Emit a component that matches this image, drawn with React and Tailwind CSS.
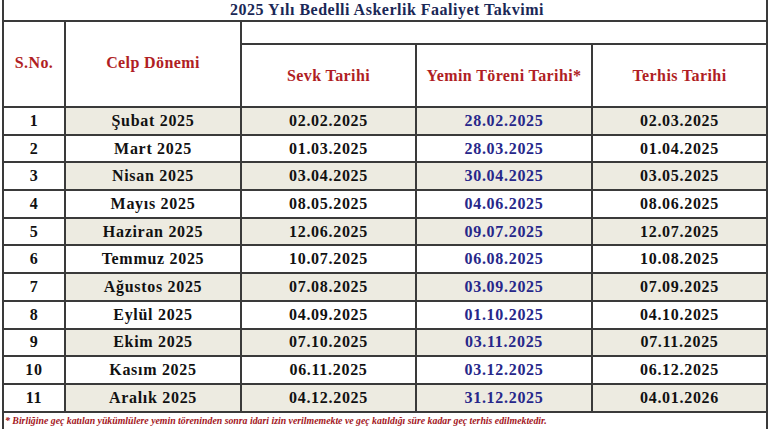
import React from "react";

const rows = [
  ["1", "Şubat 2025", "02.02.2025", "28.02.2025", "02.03.2025"],
  ["2", "Mart 2025", "01.03.2025", "28.03.2025", "01.04.2025"],
  ["3", "Nisan 2025", "03.04.2025", "30.04.2025", "03.05.2025"],
  ["4", "Mayıs 2025", "08.05.2025", "04.06.2025", "08.06.2025"],
  ["5", "Haziran 2025", "12.06.2025", "09.07.2025", "12.07.2025"],
  ["6", "Temmuz 2025", "10.07.2025", "06.08.2025", "10.08.2025"],
  ["7", "Ağustos 2025", "07.08.2025", "03.09.2025", "07.09.2025"],
  ["8", "Eylül 2025", "04.09.2025", "01.10.2025", "04.10.2025"],
  ["9", "Ekim 2025", "07.10.2025", "03.11.2025", "07.11.2025"],
  ["10", "Kasım 2025", "06.11.2025", "03.12.2025", "06.12.2025"],
  ["11", "Aralık 2025", "04.12.2025", "31.12.2025", "04.01.2026"],
];

export default function App() {
  return (
    <div className="w-[770px] h-[429px] bg-white overflow-hidden font-['Liberation_Serif','Times_New_Roman',serif]">
      <div className="ml-[2px] w-[766px] border-l-2 border-r-2 border-[#3a3a3a] h-[429px] font-bold">
        <div className="h-[22px] border-b-2 border-[#3a3a3a] flex items-center justify-center text-[16px] text-[#1a2856] tracking-[0.5px] pl-[4px]">
          2025 Yılı Bedelli Askerlik Faaliyet Takvimi
        </div>
        <div className="h-[86px] border-b-2 border-[#3a3a3a] flex text-[#b01e24] text-[16px] tracking-[0.4px]">
          <div className="w-[62px] border-r-2 border-[#3a3a3a] flex items-center justify-center pb-[2px]">
            S.No.
          </div>
          <div className="w-[176px] border-r-2 border-[#3a3a3a] flex items-center justify-center pb-[2px]">
            Celp Dönemi
          </div>
          <div className="flex-1 flex flex-col">
            <div className="h-[23px] border-b-2 border-[#3a3a3a]"></div>
            <div className="flex-1 flex">
              <div className="w-[175px] border-r-2 border-[#3a3a3a] flex items-center justify-center">
                Sevk Tarihi
              </div>
              <div className="w-[176px] border-r-2 border-[#3a3a3a] flex items-center justify-center">
                Yemin Töreni Tarihi*
              </div>
              <div className="flex-1 flex items-center justify-center">Terhis Tarihi</div>
            </div>
          </div>
        </div>
        {rows.map((r, i) => {
          const shade = i % 2 === 0 ? "bg-[#edebe1]" : "bg-white";
          return (
            <div
              key={r[0]}
              className="h-[27.7px] border-b-2 border-[#3a3a3a] flex text-[16px] text-[#111] tracking-[0.7px]"
            >
              <div className="w-[62px] border-r-2 border-[#3a3a3a] flex items-center justify-center bg-white">
                {r[0]}
              </div>
              <div className={`w-[176px] border-r-2 border-[#3a3a3a] flex items-center justify-center ${shade}`}>
                {r[1]}
              </div>
              <div className={`w-[175px] border-r-2 border-[#3a3a3a] flex items-center justify-center ${shade}`}>
                {r[2]}
              </div>
              <div className={`w-[176px] border-r-2 border-[#3a3a3a] flex items-center justify-center text-[#27278a] ${shade}`}>
                {r[3]}
              </div>
              <div className={`flex-1 flex items-center justify-center ${shade}`}>{r[4]}</div>
            </div>
          );
        })}
        <div className="pl-[1px] pt-[3px] text-[9.8px] italic text-[#a3161c] leading-none whitespace-nowrap">
          * Birliğine geç katılan yükümlülere yemin töreninden sonra idari izin verilmemekte ve geç katıldığı süre kadar geç terhis edilmektedir.
        </div>
      </div>
    </div>
  );
}
